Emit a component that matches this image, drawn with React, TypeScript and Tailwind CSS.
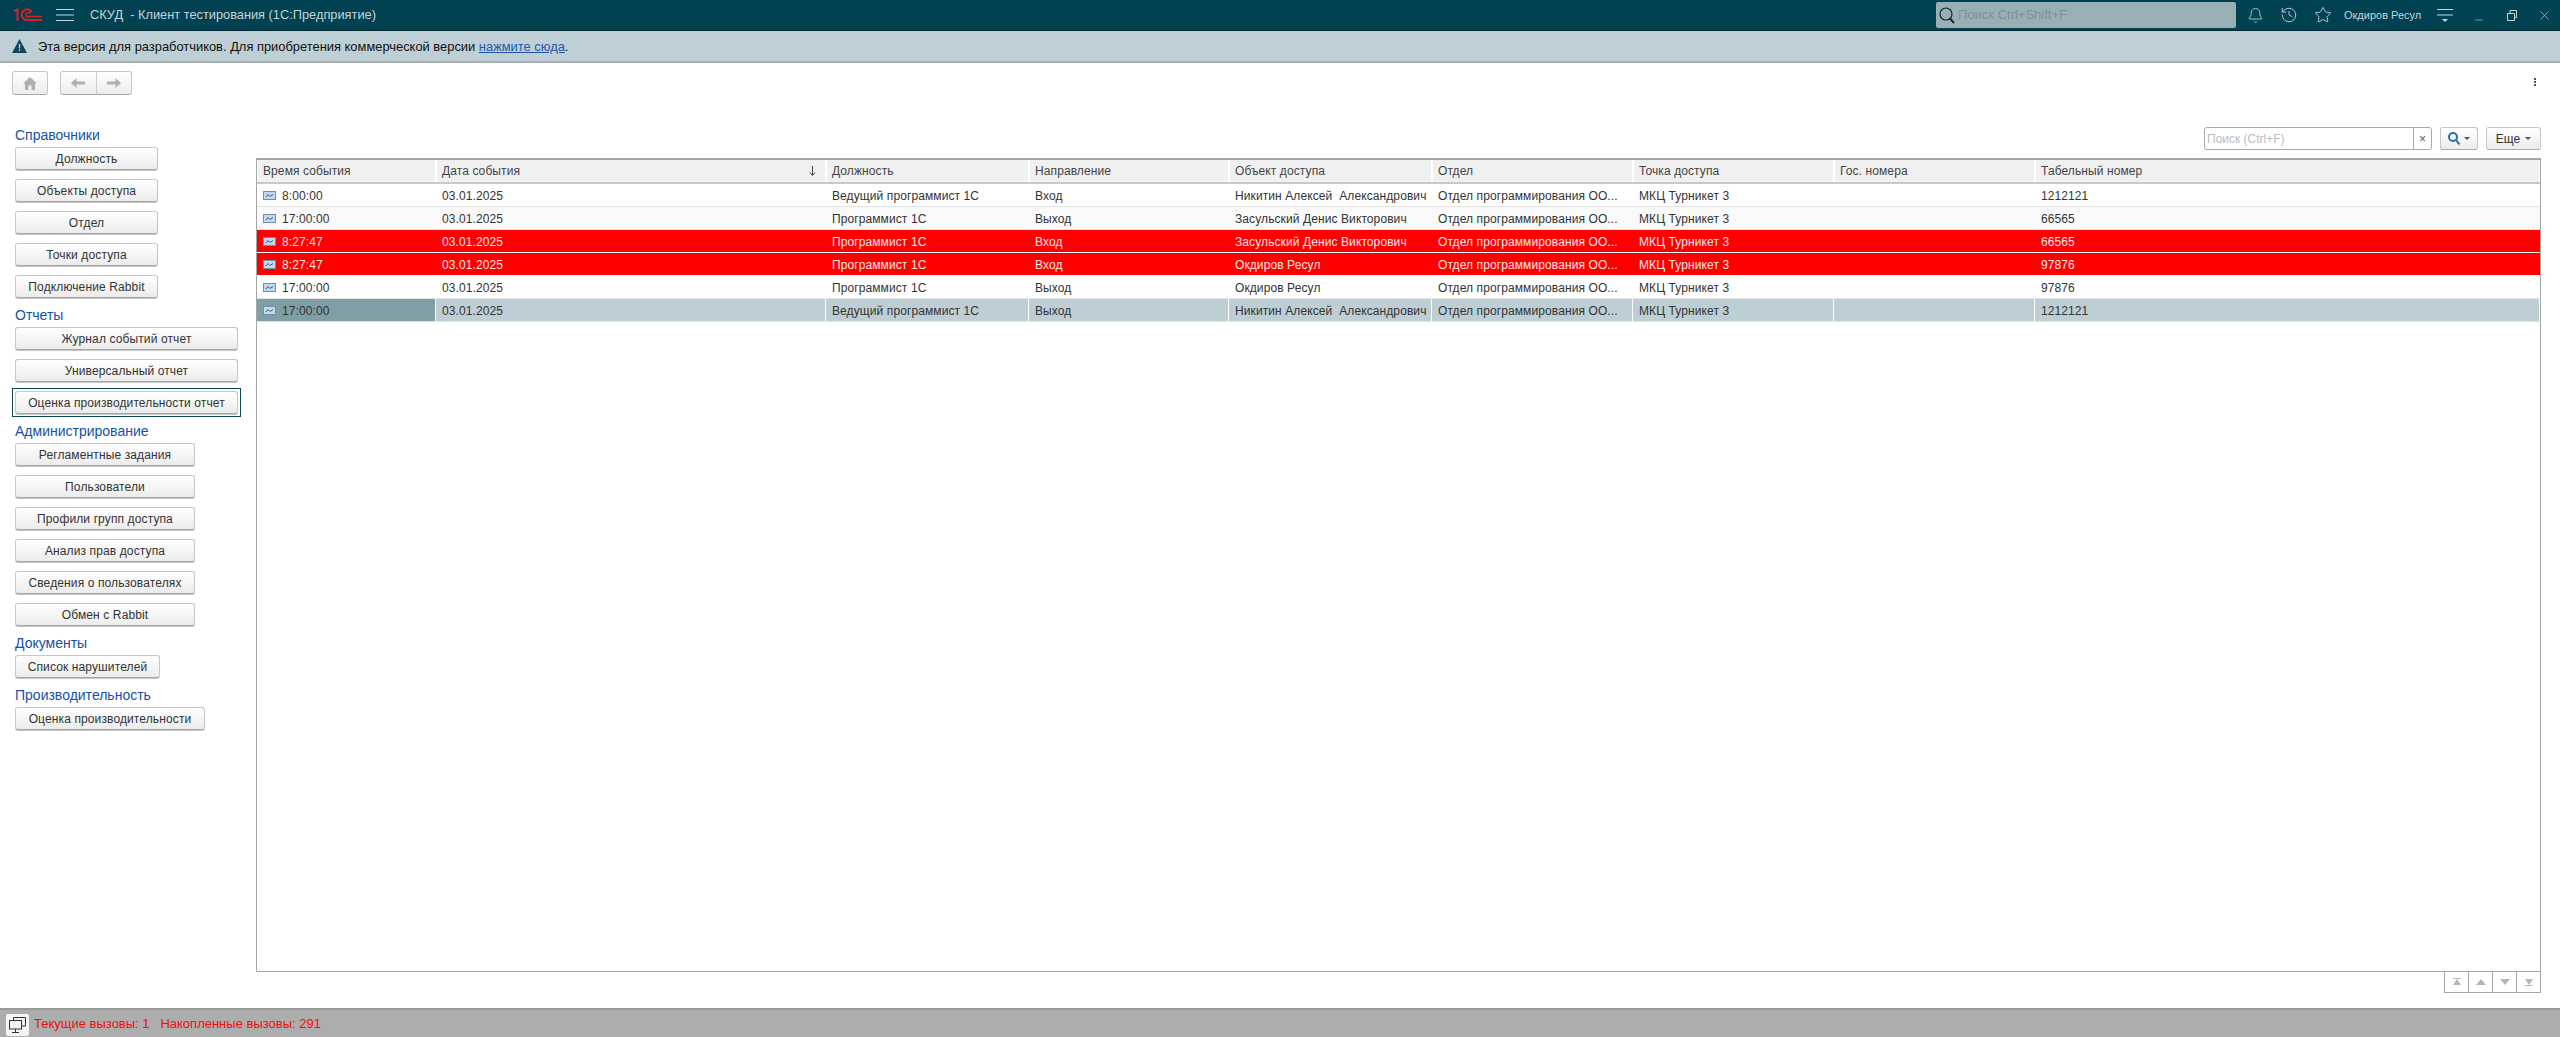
import { Bell, History, Star, X, Minus } from 'lucide-react'

const FONT = "font-['Liberation_Sans',Arial,sans-serif]"

const COLS = 'grid grid-cols-[179px_390px_203px_200px_203px_201px_201px_201px_1fr]'

const headers = ['Время события', 'Дата события', 'Должность', 'Направление', 'Объект доступа', 'Отдел', 'Точка доступа', 'Гос. номера', 'Табельный номер']

const DEPT = 'Отдел программирования ОО...'
const POINT = 'МКЦ Турникет 3'
const DATE = '03.01.2025'

type RowKind = 'plain' | 'alt' | 'red' | 'selected'

const rows: { kind: RowKind; cells: string[] }[] = [
  { kind: 'plain', cells: ['8:00:00', DATE, 'Ведущий программист 1С', 'Вход', 'Никитин Алексей  Александрович', DEPT, POINT, '', '1212121'] },
  { kind: 'alt', cells: ['17:00:00', DATE, 'Программист 1С', 'Выход', 'Засульский Денис Викторович', DEPT, POINT, '', '66565'] },
  { kind: 'red', cells: ['8:27:47', DATE, 'Программист 1С', 'Вход', 'Засульский Денис Викторович', DEPT, POINT, '', '66565'] },
  { kind: 'red', cells: ['8:27:47', DATE, 'Программист 1С', 'Вход', 'Окдиров Ресул', DEPT, POINT, '', '97876'] },
  { kind: 'plain', cells: ['17:00:00', DATE, 'Программист 1С', 'Выход', 'Окдиров Ресул', DEPT, POINT, '', '97876'] },
  { kind: 'selected', cells: ['17:00:00', DATE, 'Ведущий программист 1С', 'Выход', 'Никитин Алексей  Александрович', DEPT, POINT, '', '1212121'] },
]

const groups = [
  { title: 'Справочники', width: 'w-[143px]', items: ['Должность', 'Объекты доступа', 'Отдел', 'Точки доступа', 'Подключение Rabbit'] },
  { title: 'Отчеты', width: 'w-[223px]', items: ['Журнал событий отчет', 'Универсальный отчет', 'Оценка производительности отчет'] },
  { title: 'Администрирование', width: 'w-[180px]', items: ['Регламентные задания', 'Пользователи', 'Профили групп доступа', 'Анализ прав доступа', 'Сведения о пользователях', 'Обмен с Rabbit'] },
  { title: 'Документы', width: 'w-[145px]', items: ['Список нарушителей'] },
  { title: 'Производительность', width: 'w-[190px]', items: ['Оценка производительности'] },
]

const rowStyle: Record<RowKind, string> = {
  plain: 'bg-white text-[#333333] border-[#e4e4e4]',
  alt: 'bg-[#f9f9f9] text-[#333333] border-[#e4e4e4]',
  red: 'bg-[#ff0000] text-[#ffe8e8] border-white',
  selected: 'bg-[#bdcfd4] text-[#333333] border-[#e4e4e4]',
}

const RowIcon = () => (
  <svg width="13" height="9" viewBox="0 0 13 9" className="-mt-[1px] shrink-0">
    <rect x="0.5" y="0.5" width="12" height="8" fill="#c3d9ee" stroke="#6f8fae" />
    <path d="M3 6 L5 3.5 L7 5.5 L10 3.5" fill="none" stroke="#2f5d8c" strokeWidth="1" />
  </svg>
)

const Logo1C = () => (
  <svg width="30" height="14" viewBox="0 0 30 14" fill="none" stroke="#d8202c" strokeWidth="2">
    <path d="M1 3 L4.5 1.5 V13" />
    <path d="M19 4 A5.5 5.5 0 1 0 12.5 12 H29" />
    <path d="M17.5 5.5 A2.5 2.5 0 1 0 13.5 8.5 H29" strokeWidth="1.5" />
  </svg>
)

const MenuIcon = () => (
  <svg width="18" height="12" viewBox="0 0 18 12" stroke="#c9d6da" strokeWidth="1">
    <path d="M0 0.5 H18 M0 6 H18 M0 11.5 H18" />
  </svg>
)

const SideButton = ({ label, width }: { label: string; width: string }) => (
  <button
    className={`${width} h-[23px] rounded-[3px] border border-[#c6c6c6] border-b-[#a8a8a8] bg-gradient-to-b from-white to-[#ececec] text-[12px] leading-none tracking-[0.01em] text-[#333333] shadow-[0_1px_0_#c4c4c4]`}
  >
    {label}
  </button>
)

const PagerButton = ({ d }: { d: string }) => (
  <div className="flex h-[21px] w-[24px] items-center justify-center border-r border-b border-[#a5a5a5]">
    <svg width="10" height="8" viewBox="0 0 10 8" fill="#b5b5b5">
      <path d={d} />
    </svg>
  </div>
)

export default function App() {
  return (
    <div className={`${FONT} flex h-[1037px] w-full flex-col overflow-hidden bg-white`}>
      {/* Top bar */}
      <div className="flex h-[31px] shrink-0 items-center border-b border-[#00252e] bg-[#004252] text-[#c4d4d8]">
        <div className="ml-[13px]">
          <Logo1C />
        </div>
        <div className="ml-[13px]">
          <MenuIcon />
        </div>
        <span className="ml-[16px] whitespace-pre text-[12.8px]">СКУД  - Клиент тестирования (1С:Предприятие)</span>
        <div className="ml-auto flex h-[26px] w-[300px] items-center gap-[3px] rounded-[2px] bg-[#98b0b5] pl-[3px] text-[13px] text-[#7c9298]">
          <svg width="16" height="17" viewBox="0 0 16 17" fill="none" stroke="#12272d" strokeWidth="1.2">
            <circle cx="7" cy="7" r="6" />
            <path d="M11 11.5 L15 16" strokeWidth="2" />
          </svg>
          Поиск Ctrl+Shift+F
        </div>
        <Bell size={17} strokeWidth={1.2} className="ml-[11px]" />
        <History size={18} strokeWidth={1.2} className="ml-[16px]" />
        <Star size={18} strokeWidth={1.2} className="ml-[16px]" />
        <span className="ml-[12px] w-[80px] whitespace-nowrap text-[11px]">Окдиров Ресул</span>
        <svg width="16" height="13" viewBox="0 0 16 13" stroke="#c4d4d8" className="ml-[13px]">
          <path d="M0 0.5 H16 M0 6 H16" />
          <path d="M5 10 H11 L8 13 Z" fill="#c4d4d8" stroke="none" />
        </svg>
        <Minus size={12} strokeWidth={1.2} className="ml-[20px] mt-[10px]" />
        <svg width="10" height="11" viewBox="0 0 10 11" fill="none" stroke="#c4d4d8" className="ml-[22px]">
          <path d="M0.5 3.5 H7.5 V10.5 H0.5 Z M3 3.5 V0.5 H9.5 V7.5 H7.5" />
        </svg>
        <X size={15} strokeWidth={1} className="ml-[20px] mr-[8px]" />
      </div>

      {/* Developer version notice */}
      <div className="flex h-[32px] shrink-0 items-center border-b-2 border-[#a7adaf] bg-[#bed0d5] pl-[12px] text-[12.9px] text-[#111111]">
        <svg width="15" height="14" viewBox="0 0 15 14" className="mr-[11px]">
          <path d="M7.5 0 L15 14 H0 Z" fill="#0e4756" />
          <path d="M6.8 5 H8.2 V9.5 H6.8 Z M6.8 10.5 H8.2 V12 H6.8 Z" fill="#bed0d5" />
        </svg>
        <span className="pt-[1px]">
          Эта версия для разработчиков. Для приобретения коммерческой версии{' '}
          <span className="text-[#1f57b0] underline">нажмите сюда</span>.
        </span>
      </div>

      {/* Navigation toolbar */}
      <div className="flex h-[64px] shrink-0 items-start pl-[12px] pr-[24px] pt-[8px]">
        <div className="flex h-[24px] w-[36px] items-center justify-center rounded-[3px] border border-[#c6c6c6] border-b-[#a8a8a8] bg-gradient-to-b from-white to-[#ececec]">
          <svg width="14" height="13" viewBox="0 0 14 13" fill="#b0b0b0">
            <path d="M7 0 L14 6.5 H12 V13 H8.5 V8.5 H5.5 V13 H2 V6.5 H0 Z" />
          </svg>
        </div>
        <div className="ml-[12px] flex h-[24px] w-[72px] rounded-[3px] border border-[#c6c6c6] border-b-[#a8a8a8] bg-gradient-to-b from-white to-[#ececec]">
          <div className="flex flex-1 items-center justify-center border-r border-[#d0d0d0]">
            <svg width="14" height="10" viewBox="0 0 14 10" fill="#b0b0b0">
              <path d="M0 5 L5.5 0 V3.5 H14 V6.5 H5.5 V10 Z" />
            </svg>
          </div>
          <div className="flex flex-1 items-center justify-center">
            <svg width="14" height="10" viewBox="0 0 14 10" fill="#b0b0b0">
              <path d="M14 5 L8.5 0 V3.5 H0 V6.5 H8.5 V10 Z" />
            </svg>
          </div>
        </div>
        <div className="ml-auto mt-[7px] flex flex-col gap-[1px]">
          <span className="h-[2px] w-[2px] bg-[#555555]" />
          <span className="h-[2px] w-[2px] bg-[#555555]" />
          <span className="h-[2px] w-[2px] bg-[#555555]" />
        </div>
      </div>

      {/* Body */}
      <div className="flex min-h-0 flex-1">
        <div className="flex w-[256px] shrink-0 flex-col gap-[9px] pl-[15px]">
          {groups.map((group) => (
            <div key={group.title} className="flex flex-col gap-[9px]">
              <div className="-mb-[5px] h-[16px] text-[14px] leading-[16px] text-[#1650a8]">{group.title}</div>
              {group.items.map((item) =>
                item === 'Оценка производительности отчет' ? (
                  <div key={item} className="-m-[3px] flex w-fit border border-[#0b4a52] p-[2px]">
                    <SideButton label={item} width={group.width} />
                  </div>
                ) : (
                  <SideButton key={item} label={item} width={group.width} />
                ),
              )}
            </div>
          ))}
        </div>

        <div className="flex min-w-0 flex-1 flex-col pb-[15px] pr-[19px]">
          {/* Search */}
          <div className="flex h-[23px] shrink-0 justify-end">
            <div className="flex h-[23px] w-[228px] rounded-[3px] border border-[#a9a9a9] text-[12px] text-[#bdbdbd]">
              <div className="flex flex-1 items-center pl-[2px]">Поиск (Ctrl+F)</div>
              <div className="flex w-[18px] items-center justify-center border-l border-[#a9a9a9] text-[#555555]">×</div>
            </div>
            <div className="ml-[8px] flex h-[23px] w-[38px] items-center justify-center gap-[4px] rounded-[3px] border border-[#c6c6c6] border-b-[#a8a8a8] bg-gradient-to-b from-white to-[#ececec]">
              <svg width="12" height="13" viewBox="0 0 12 13" fill="none" stroke="#2a6fa8" strokeWidth="2">
                <circle cx="5" cy="5" r="4" />
                <path d="M8 8 L11.5 12.5" />
              </svg>
              <svg width="6" height="3" viewBox="0 0 6 3" fill="#555555">
                <path d="M0 0 H6 L3 3 Z" />
              </svg>
            </div>
            <div className="ml-[8px] flex h-[23px] w-[55px] items-center justify-center gap-[5px] rounded-[3px] border border-[#c6c6c6] border-b-[#a8a8a8] bg-gradient-to-b from-white to-[#ececec] text-[12px] text-[#333333]">
              Еще
              <svg width="6" height="3" viewBox="0 0 6 3" fill="#555555">
                <path d="M0 0 H6 L3 3 Z" />
              </svg>
            </div>
          </div>

          {/* Table */}
          <div className="mt-[8px] min-h-0 flex-1 border border-t-2 border-[#a5a5a5] text-[12px] leading-none tracking-[0.008em]">
            <div className={`${COLS} h-[24px] border-b-2 border-[#c9c9c9] text-[#444444]`}>
              {headers.map((header, i) => (
                <div key={header} className="relative flex items-center border-l border-r border-white bg-[#f0f0f0] pl-[5px]">
                  {header}
                  {i === 1 && (
                    <svg width="7" height="10" viewBox="0 0 7 10" fill="none" stroke="#444444" className="absolute right-[9px] top-[6px]">
                      <path d="M3.5 0 V9 M1 6.5 L3.5 9.5 L6 6.5" />
                    </svg>
                  )}
                </div>
              ))}
            </div>
            {rows.map((row, rowIndex) => (
              <div key={rowIndex} className={`${COLS} h-[23px] border-b ${rowStyle[row.kind]}`}>
                {row.cells.map((cell, i) => (
                  <div
                    key={i}
                    className={`flex items-center gap-[6px] whitespace-pre pl-[6px] pt-[1px] ${
                      row.kind === 'selected' ? 'border-r border-white' : ''
                    } ${row.kind === 'selected' && i === 0 ? 'bg-[#7f9ea6]' : ''}`}
                  >
                    {i === 0 && <RowIcon />}
                    {cell}
                  </div>
                ))}
              </div>
            ))}
          </div>

          {/* Pager */}
          <div className="flex shrink-0 justify-end">
            <div className="flex border-l border-[#a5a5a5]">
              <PagerButton d="M1 0 H9 V1 H1 Z M5 1 L9 7 H1 Z" />
              <PagerButton d="M5 1 L10 7 H0 Z" />
              <PagerButton d="M0 1 H10 L5 7 Z" />
              <PagerButton d="M1 1 H9 L5 7 Z M1 7 H9 V8 H1 Z" />
            </div>
          </div>
        </div>
      </div>

      {/* Status bar */}
      <div className="flex h-[29px] shrink-0 items-end border-t-2 border-[#9a9a9a] bg-[#adadad] pl-[6px] text-[13px] text-[#f01010]">
        <div className="mb-[1px] flex h-[22px] w-[23px] items-center justify-center rounded-[2px] bg-[#f4f4f4]">
          <svg width="17" height="16" viewBox="0 0 17 16" fill="none" stroke="#333333">
            <path d="M4.5 3 V0.5 H16.5 V9 H13" />
            <rect x="0.5" y="3.5" width="12" height="8.5" fill="#f4f4f4" />
            <path d="M6.5 12 V15 M3 15.5 H10" />
          </svg>
        </div>
        <span className="mb-[4px] ml-[5px] whitespace-pre">Текущие вызовы: 1   Накопленные вызовы: 291</span>
      </div>
    </div>
  )
}
